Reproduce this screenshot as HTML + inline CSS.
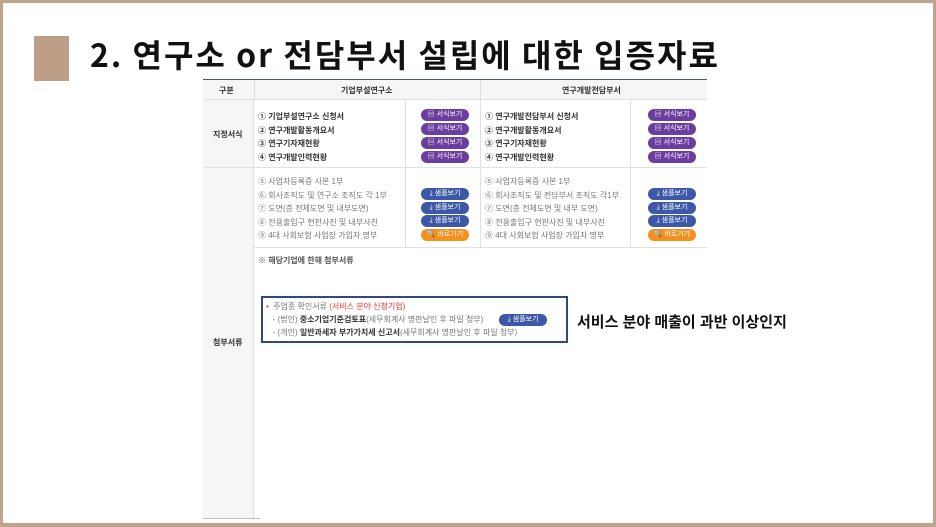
<!DOCTYPE html>
<html><head><meta charset="utf-8"><style>
*{margin:0;padding:0;box-sizing:border-box}
body{width:936px;height:527px;position:relative;background:#fff;font-family:"Liberation Sans","Noto Sans CJK KR",sans-serif;overflow:hidden}
.frame{position:absolute;left:0;top:0;width:936px;height:527px;border:3px solid #bfa48b;border-bottom-width:4px}
.a{position:absolute;white-space:nowrap}
.t{font-size:8px;color:#333}
.g{font-size:8px;color:#777}
.b{font-weight:bold}
.btn{position:absolute;height:12px;width:48px;border-radius:6px;color:#fff;font-size:7px;line-height:12px;text-align:center}
.p{background:#6b3d9e}.bl{background:#3c58a6}.o{background:#f5901c}
.gray{background:#f6f6f6}
</style></head><body>
<div class="frame"></div>
<div class="a" style="left:34px;top:36px;width:35px;height:45px;background:#bc9f86"></div>
<div class="a b" style="left:90px;top:31px;font-size:32px;letter-spacing:2px;color:#111;font-family:'Noto Sans CJK KR',sans-serif">2. 연구소 or 전담부서 설립에 대한 입증자료</div>

<!-- table -->
<div class="a" style="left:203px;top:79px;width:504px;height:1px;background:#4b5a75"></div>
<div class="a gray" style="left:203px;top:80px;width:504px;height:20px;border-bottom:1px solid #e2e2e2"></div>
<div class="a gray" style="left:203px;top:100px;width:51px;height:419px;border-right:1px solid #dedede"></div>
<div class="a" style="left:203px;top:518px;width:57px;height:1px;background:#bbb"></div>
<div class="a" style="left:254px;top:80px;width:1px;height:20px;background:#ddd"></div>
<div class="a" style="left:480px;top:80px;width:1px;height:167px;background:#e0e0e0"></div>
<div class="a" style="left:405px;top:100px;width:1px;height:147px;background:#e0e0e0"></div>
<div class="a" style="left:630px;top:100px;width:1px;height:147px;background:#e0e0e0"></div>
<div class="a" style="left:203px;top:167px;width:504px;height:1px;background:#e2e2e2"></div>
<div class="a" style="left:254px;top:247px;width:453px;height:1px;background:#e2e2e2"></div>

<div class="a t b" style="left:219px;top:85px">구분</div>
<div class="a t b" style="left:341px;top:85px">기업부설연구소</div>
<div class="a t b" style="left:562px;top:85px">연구개발전담부서</div>
<div class="a t b" style="left:213px;top:129px">지정서식</div>
<div class="a t b" style="left:213px;top:337px">첨부서류</div>

<div class="a t b" style="left:258px;top:110px;line-height:13.7px">① 기업부설연구소 신청서<br>② 연구개발활동개요서<br>③ 연구기자재현황<br>④ 연구개발인력현황</div>
<div class="a t b" style="left:485px;top:110px;line-height:13.7px">① 연구개발전담부서 신청서<br>② 연구개발활동개요서<br>③ 연구기자재현황<br>④ 연구개발인력현황</div>
<div class="btn p" style="left:421px;top:109px">▤ 서식보기</div>
<div class="btn p" style="left:421px;top:123px">▤ 서식보기</div>
<div class="btn p" style="left:421px;top:137px">▤ 서식보기</div>
<div class="btn p" style="left:421px;top:151px">▤ 서식보기</div>
<div class="btn p" style="left:648px;top:109px">▤ 서식보기</div>
<div class="btn p" style="left:648px;top:123px">▤ 서식보기</div>
<div class="btn p" style="left:648px;top:137px">▤ 서식보기</div>
<div class="btn p" style="left:648px;top:151px">▤ 서식보기</div>

<div class="a g" style="left:258px;top:175px;line-height:13.6px">⑤ 사업자등록증 사본 1부<br>⑥ 회사조직도 및 연구소 조직도 각 1부<br>⑦ 도면(층 전체도면 및 내부도면)<br>⑧ 전용출입구 현판사진 및 내부사진<br>⑨ 4대 사회보험 사업장 가입자 명부</div>
<div class="a g" style="left:485px;top:175px;line-height:13.6px">⑤ 사업자등록증 사본 1부<br>⑥ 회사조직도 및 전담부서 조직도 각1부<br>⑦ 도면(층 전체도면 및 내부 도면)<br>⑧ 전용출입구 현판사진 및 내부사진<br>⑨ 4대 사회보험 사업장 가입자 명부</div>
<div class="btn bl" style="left:421px;top:188px">⤓ 샘플보기</div>
<div class="btn bl" style="left:421px;top:202px">⤓ 샘플보기</div>
<div class="btn bl" style="left:421px;top:215px">⤓ 샘플보기</div>
<div class="btn o" style="left:421px;top:229px">🔍 바로가기</div>
<div class="btn bl" style="left:648px;top:188px">⤓ 샘플보기</div>
<div class="btn bl" style="left:648px;top:202px">⤓ 샘플보기</div>
<div class="btn bl" style="left:648px;top:215px">⤓ 샘플보기</div>
<div class="btn o" style="left:648px;top:229px">🔍 바로가기</div>

<div class="a t b" style="left:258px;top:255px;color:#555">※ 해당기업에 한해 첨부서류</div>

<div class="a" style="left:261px;top:296px;width:307px;height:47px;border:2px solid #2f4a7f"></div>
<div class="a g" style="left:266px;top:300px;line-height:13px"><span style="color:#e33">•</span>&nbsp; 주업종 확인서류 <span style="color:#e33">(서비스 분야 신청기업)</span><br>&nbsp;&nbsp; - (법인) <b style="color:#333">중소기업기준검토표</b>(세무회계사 명판날인 후 파일 청부)<br>&nbsp;&nbsp; - (개인) <b style="color:#333">일반과세자 부가가치세 신고서</b>(세무회계사 명판날인 후 파일 청부)</div>
<div class="btn bl" style="left:499px;top:314px">⤓ 샘플보기</div>

<div class="a b" style="left:577px;top:311px;font-size:15px;color:#111">서비스 분야 매출이 과반 이상인지</div>
</body></html>
